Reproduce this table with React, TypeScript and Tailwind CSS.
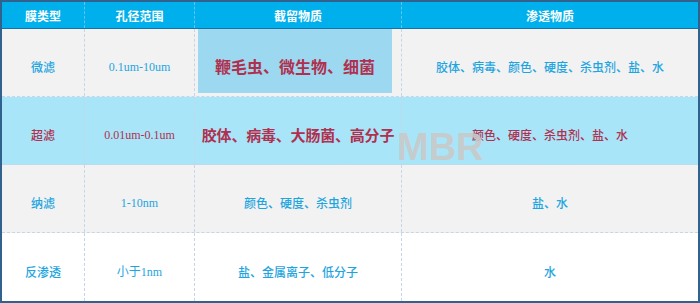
const cjk = { fontFamily: '"Noto Sans CJK SC", "Noto Sans", sans-serif' }
const serif = { fontFamily: '"Liberation Serif", "Noto Sans CJK SC", serif' }

type Row = {
    type: string
    size: string
    keep: string
    pass: string
    bg: string
    tone: 'blue' | 'red'
}

const rows: Row[] = [
    {
        type: '微滤',
        size: '0.1um-10um',
        keep: '鞭毛虫、微生物、细菌',
        pass: '胶体、病毒、颜色、硬度、杀虫剂、盐、水',
        bg: 'bg-[#f2f2f2]',
        tone: 'blue',
    },
    {
        type: '超滤',
        size: '0.01um-0.1um',
        keep: '胶体、病毒、大肠菌、高分子',
        pass: '颜色、硬度、杀虫剂、盐、水',
        bg: 'bg-[#a9e5f8]',
        tone: 'red',
    },
    {
        type: '纳滤',
        size: '1-10nm',
        keep: '颜色、硬度、杀虫剂',
        pass: '盐、水',
        bg: 'bg-[#f2f2f2]',
        tone: 'blue',
    },
    {
        type: '反渗透',
        size: '小于1nm',
        keep: '盐、金属离子、低分子',
        pass: '水',
        bg: 'bg-white',
        tone: 'blue',
    },
]

function Cell({
    children,
    last,
    className = '',
}: {
    children: React.ReactNode
    last?: boolean
    className?: string
}) {
    return (
        <div
            className={`flex items-center justify-center pt-[9px] ${
                last ? '' : 'border-r border-dashed border-[#c6d6e6]'
            } ${className}`}
        >
            {children}
        </div>
    )
}

export default function App() {
    return (
        <div className="relative h-[303px] w-[700px] overflow-hidden border-2 border-[#31628e] bg-white">
            {/* header */}
            <div
                className="grid h-[27px] grid-cols-[83px_110px_207px_1fr] border-b border-[#1872a8] bg-[#00b0ec] text-[12px] font-bold text-white"
                style={cjk}
            >
                <div className="flex items-center justify-center pt-[2px] border-r border-dashed border-[#5cc6ef]">膜类型</div>
                <div className="flex items-center justify-center pt-[2px] border-r border-dashed border-[#5cc6ef]">孔径范围</div>
                <div className="flex items-center justify-center pt-[2px] border-r border-dashed border-[#5cc6ef]">截留物质</div>
                <div className="flex items-center justify-center pt-[2px]">渗透物质</div>
            </div>

            {rows.map((r, i) => {
                const color = r.tone === 'red' ? 'text-[#b0304f]' : 'text-[#1ea5e0]'
                return (
                    <div
                        key={r.type}
                        className={`grid h-[68px] grid-cols-[83px_110px_207px_1fr] ${r.bg} ${
                            i < rows.length - 1 ? 'border-b border-dashed border-[#c6d6e6]' : ''
                        }`}
                    >
                        <Cell className={`text-[12px] font-medium ${color}`}>
                            <span style={cjk}>{r.type}</span>
                        </Cell>
                        <Cell className={`text-[12px] ${color}`}>
                            <span style={serif}>{r.size}</span>
                        </Cell>
                        {i === 0 ? (
                            <div className="border-r border-dashed border-[#c6d6e6] pb-[3px] pl-[3px] pr-[9px]">
                                <div
                                    className="flex h-full items-center justify-center bg-[#9cd9f0] pt-[9px] text-[16px] font-bold text-[#b0304f]"
                                    style={cjk}
                                >
                                    {r.keep}
                                </div>
                            </div>
                        ) : (
                            <Cell
                                className={
                                    i === 1
                                        ? 'text-[15px] font-bold tracking-[-0.2px] text-[#b0304f] whitespace-nowrap'
                                        : `text-[12px] font-medium ${color}`
                                }
                            >
                                <span style={cjk}>{r.keep}</span>
                            </Cell>
                        )}
                        <Cell last className={`text-[12px] font-medium ${color}`}>
                            <span style={cjk}>{r.pass}</span>
                        </Cell>
                    </div>
                )
            })}

            {/* watermark */}
            <div
                className="pointer-events-none absolute left-[395px] top-[126px] text-[38px] font-bold leading-none text-[#c9c9c9]/90"
                style={{ fontFamily: '"Liberation Sans", Arial, sans-serif' }}
            >
                MBR
            </div>
        </div>
    )
}
